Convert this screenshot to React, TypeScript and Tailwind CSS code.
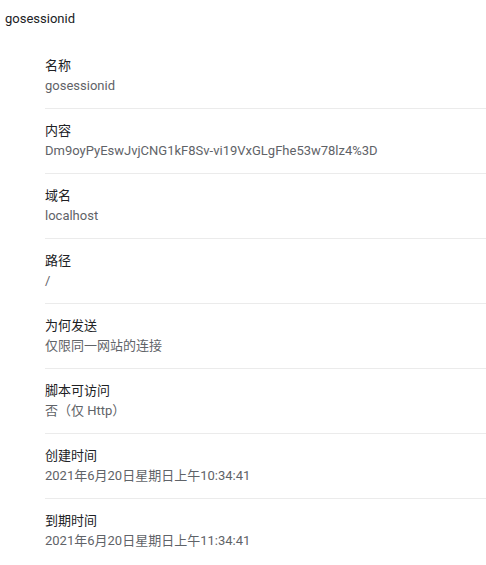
const fields = [
  { label: '名称', value: 'gosessionid' },
  { label: '内容', value: 'Dm9oyPyEswJvjCNG1kF8Sv-vi19VxGLgFhe53w78lz4%3D' },
  { label: '域名', value: 'localhost' },
  { label: '路径', value: '/' },
  { label: '为何发送', value: '仅限同一网站的连接' },
  { label: '脚本可访问', value: '否（仅 Http）' },
  { label: '创建时间', value: '2021年6月20日星期日上午10:34:41' },
  { label: '到期时间', value: '2021年6月20日星期日上午11:34:41' },
]

export default function App() {
  return (
    <div
      className="min-h-screen w-full bg-white text-[13px] leading-5"
      style={{ fontFamily: 'Roboto, "Noto Sans CJK SC", sans-serif' }}
    >
      {/* Cookie name */}
      <div className="pl-[5px] pt-[9px] text-[#202124]">gosessionid</div>

      {/* Cookie details */}
      <div className="mt-[15px] pl-[45px]">
        {fields.map((f, i) => (
          <div
            key={f.label}
            className={
              i < fields.length - 1
                ? 'pt-[12px] pb-[12px] border-b border-[#ebebeb]'
                : 'pt-[12px] pb-[12px]'
            }
          >
            <div className="text-[#202124]">{f.label}</div>
            <div className="text-[#5f6368]">{f.value}</div>
          </div>
        ))}
      </div>
    </div>
  )
}
